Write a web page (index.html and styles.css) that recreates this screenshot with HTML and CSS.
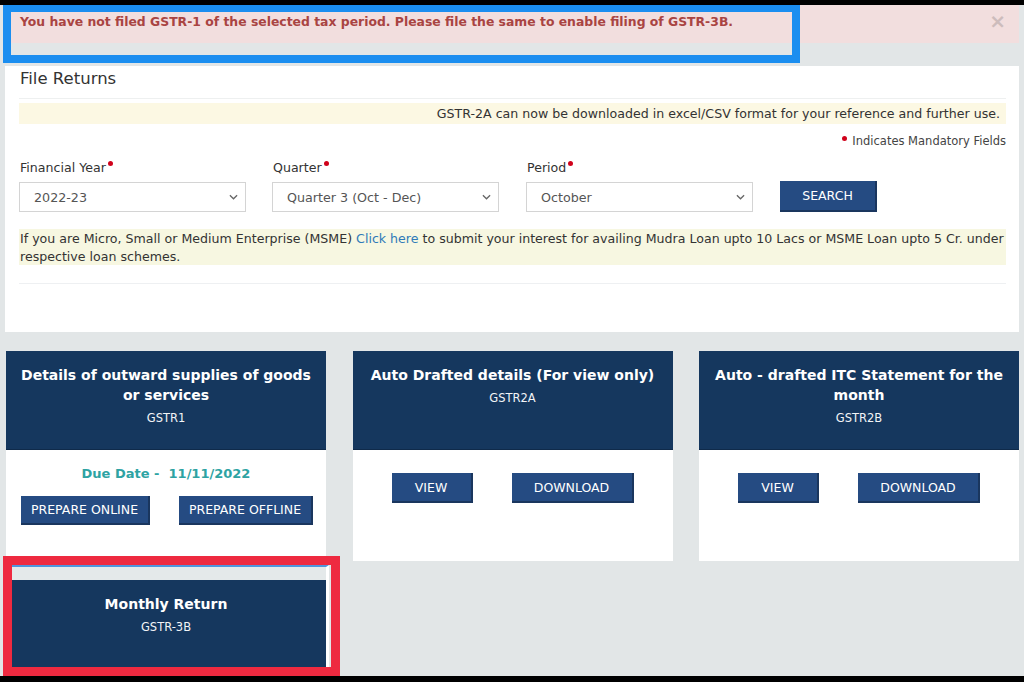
FILE: index.html
```html
<!DOCTYPE html>
<html lang="en">
<head>
<meta charset="utf-8">
<title>File Returns</title>
<link rel="stylesheet" href="styles.css">
</head>
<body>
<div class="screen">
  <div class="main">
    <div class="alert">
      <span class="alert-text">You have not filed GSTR-1 of the selected tax period. Please file the same to enable filing of GSTR-3B.</span>
      <span class="alert-close">&times;</span>
    </div>

    <div class="panel">
      <h2 class="panel-title">File Returns</h2>
      <div class="info-bar">GSTR-2A can now be downloaded in excel/CSV format for your reference and further use.</div>
      <div class="mandatory"><span class="req"></span> Indicates Mandatory Fields</div>
      <div class="form-row">
        <div class="field">
          <label class="field-label">Financial Year<span class="req"></span></label>
          <div class="select"><span>2022-23</span><svg class="chev" viewBox="0 0 10 6" width="9" height="6"><path d="M1 1l4 4 4-4" fill="none" stroke="#666" stroke-width="1.4"/></svg></div>
        </div>
        <div class="field">
          <label class="field-label">Quarter<span class="req"></span></label>
          <div class="select"><span>Quarter 3 (Oct - Dec)</span><svg class="chev" viewBox="0 0 10 6" width="9" height="6"><path d="M1 1l4 4 4-4" fill="none" stroke="#666" stroke-width="1.4"/></svg></div>
        </div>
        <div class="field">
          <label class="field-label">Period<span class="req"></span></label>
          <div class="select"><span>October</span><svg class="chev" viewBox="0 0 10 6" width="9" height="6"><path d="M1 1l4 4 4-4" fill="none" stroke="#666" stroke-width="1.4"/></svg></div>
        </div>
        <div class="field field-btn">
          <button class="btn btn-search">SEARCH</button>
        </div>
      </div>
      <div class="msme-bar">If you are Micro, Small or Medium Enterprise (MSME) <a class="link">Click here</a> to submit your interest for availing Mudra Loan upto 10 Lacs or MSME Loan upto 5 Cr. under respective loan schemes.</div>
      <div class="panel-rule"></div>
    </div>

    <div class="cards">
      <div class="card">
        <div class="card-head">
          <div class="card-title">Details of outward supplies of goods or services</div>
          <div class="card-sub">GSTR1</div>
        </div>
        <div class="card-body body-gstr1">
          <div class="due">Due Date -&nbsp; 11/11/2022</div>
          <div class="btn-row row-gstr1">
            <button class="btn btn-online">PREPARE ONLINE</button>
            <button class="btn btn-offline">PREPARE OFFLINE</button>
          </div>
        </div>
      </div>
      <div class="card">
        <div class="card-head">
          <div class="card-title">Auto Drafted details (For view only)</div>
          <div class="card-sub">GSTR2A</div>
        </div>
        <div class="card-body body-view">
          <div class="btn-row">
            <button class="btn btn-view">VIEW</button>
            <button class="btn btn-dl">DOWNLOAD</button>
          </div>
        </div>
      </div>
      <div class="card">
        <div class="card-head">
          <div class="card-title">Auto - drafted ITC Statement for the month</div>
          <div class="card-sub">GSTR2B</div>
        </div>
        <div class="card-body body-view">
          <div class="btn-row">
            <button class="btn btn-view">VIEW</button>
            <button class="btn btn-dl">DOWNLOAD</button>
          </div>
        </div>
      </div>
      <div class="card card-3b">
        <div class="card-head">
          <div class="card-title">Monthly Return</div>
          <div class="card-sub">GSTR-3B</div>
        </div>
      </div>
    </div>
  </div>
  <div class="mark mark-blue"></div>
  <div class="mark mark-red"></div>
</div>
</body>
</html>
```

FILE: styles.css
```css
* { box-sizing: border-box; }
html, body { margin: 0; padding: 0; }
body {
  background: #000;
  font-family: "DejaVu Sans", Verdana, sans-serif;
  color: #333;
}
.screen {
  position: relative;
  margin-top: 5px;
  height: 671px;
  width: 1024px;
  background: #e2e6e7;
  overflow: hidden;
}
.main { padding: 0 5px; }

/* alert */
.alert {
  display: flex;
  justify-content: space-between;
  align-items: flex-start;
  height: 38px;
  background: #f2dede;
  padding: 9px 13px 0 15px;
}
.alert-text {
  color: #a94442;
  font-weight: bold;
  font-size: 12.4px;
  line-height: 15px;
}
.alert-close {
  color: #cdbcbc;
  font-size: 20px;
  line-height: 14px;
  font-weight: bold;
}

/* panel */
.panel {
  margin-top: 23px;
  background: #fff;
  padding: 2px 13px 48px 14px;
}
.panel-title {
  margin: 0;
  font-size: 16.5px;
  font-weight: normal;
  line-height: 22px;
  padding-left: 1px;
  color: #333;
  padding-bottom: 8px;
  border-bottom: 1px solid #eef0f0;
}
.info-bar {
  margin-top: 4px;
  background: #fcf8e3;
  height: 21px;
  line-height: 21px;
  font-size: 12.6px;
  text-align: right;
  padding-right: 6px;
  color: #333;
}
.mandatory {
  margin-top: 8px;
  text-align: right;
  font-size: 11.5px;
  line-height: 18px;
  color: #444;
}
.req {
  display: inline-block;
  width: 5px;
  height: 5px;
  border-radius: 50%;
  background: #d0021b;
  vertical-align: 6px;
  margin-left: 2px;
}
.mandatory .req { margin-right: 2px; vertical-align: 4px; }
.form-row {
  margin-top: 9px;
  display: grid;
  grid-template-columns: 253px 254px 254px 200px;
}
.field { display: flex; flex-direction: column; }
.field-label {
  font-size: 12.6px;
  line-height: 18px;
  padding-left: 1px;
  color: #333;
}
.select {
  margin-top: 5px;
  width: 227px;
  height: 30px;
  border: 1px solid #d4d4d4;
  background: #fff;
  display: flex;
  align-items: center;
  justify-content: space-between;
  padding: 0 6px 0 14px;
  font-size: 12.7px;
  color: #555;
}
.chev { margin-right: 1px; }
.field-btn { justify-content: flex-end; }

.btn {
  font-family: "DejaVu Sans", Verdana, sans-serif;
  background: #254b82;
  color: #fff;
  border: none;
  border-bottom: 2px solid #1a365e;
  border-right: 2px solid #1a365e;
  font-size: 12.5px;
  padding: 0;
  height: 30px;
  cursor: pointer;
}
.btn-search { width: 97px; height: 31px; }

.msme-bar {
  margin-top: 17px;
  background: #f7f7e1;
  font-size: 12.6px;
  line-height: 17.5px;
  padding: 1px 2px 0 1px;
  height: 36px;
  color: #333;
}
.link { color: #2f7ab8; }
.panel-rule {
  margin-top: 18px;
  border-top: 1px solid #eef0f2;
}

/* cards */
.cards {
  margin-top: 19px;
  margin-left: 1px;
  display: grid;
  grid-template-columns: 320px 320px 320px;
  column-gap: 26.5px;
  row-gap: 4px;
  grid-template-rows: 210px auto;
}
.card { background: #fff; display: flex; flex-direction: column; }
.card-head {
  height: 99px;
  background: #15375e;
  color: #fff;
  text-align: center;
  padding: 14px 8px 0;
  border-bottom: 1px solid #0f2a4a;
}
.card-title {
  font-weight: bold;
  font-size: 14px;
  line-height: 20px;
}
.card-sub {
  margin-top: 4px;
  font-size: 11.5px;
  line-height: 18px;
  color: #f2f4f7;
}
.card-body { flex: 1; }
.body-gstr1 { padding-top: 14px; }
.due {
  text-align: center;
  color: #2ea3a3;
  font-weight: bold;
  font-size: 13px;
  line-height: 20px;
}
.btn-row {
  display: flex;
  justify-content: space-evenly;
}
.row-gstr1 {
  margin-top: 12px;
  justify-content: flex-start;
  padding-left: 15px;
  gap: 29px;
}
.body-view { padding-top: 23px; }
.btn-view { width: 81px; }
.btn-dl { width: 122px; }
.btn-online { width: 129px; height: 29px; }
.btn-offline { width: 134px; height: 29px; }

.card-3b {
  width: 323px;
  background: #e4e9ea;
  border-top: 2px solid #4f95dc;
  padding-top: 13px;
  border-right: 3px solid #fff;
}

/* annotation marks */
.mark { position: absolute; pointer-events: none; }
.mark-blue {
  left: 3px;
  top: 0;
  width: 797px;
  height: 58px;
  border: 8px solid #1b8ef0;
  border-top-width: 7px;
}
.mark-red {
  left: 3px;
  top: 551px;
  width: 337px;
  height: 120px;
  border: 9px solid #ee2a40;
}
```
